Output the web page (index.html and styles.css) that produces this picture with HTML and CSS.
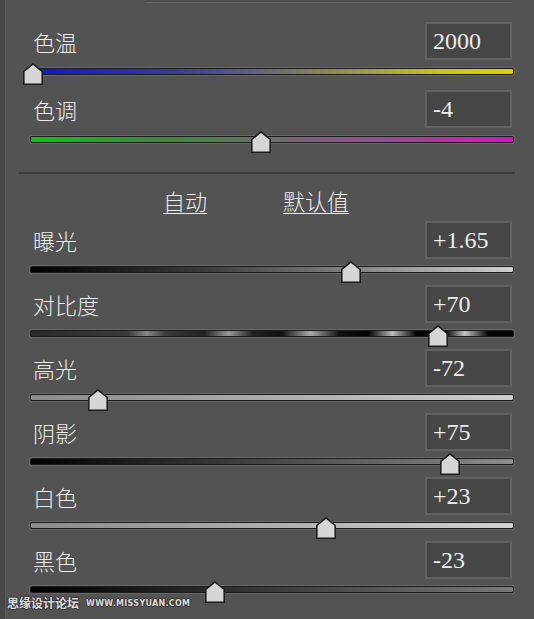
FILE: index.html
```html
<!DOCTYPE html>
<html lang="zh-CN">
<head>
  <meta charset="UTF-8">
  <meta name="viewport" content="width=device-width, initial-scale=1.0">
  <title>基本调整</title>
  <link rel="stylesheet" href="styles.css">
</head>
<body>
  <div class="panel">
    <div class="top-field"></div>

    <div class="group group-white-balance">
      <div class="row">
        <div class="row-head">
          <span class="row-label">色温</span>
          <span class="row-value">2000</span>
        </div>
        <div class="track track-temp">
          <span class="thumb" style="left: 0.4%"><svg viewBox="0 0 20 22" width="20" height="22"><polygon points="10,0.8 19.2,8.5 19.2,21.2 0.8,21.2 0.8,8.5"/></svg></span>
        </div>
      </div>
      <div class="row">
        <div class="row-head">
          <span class="row-label">色调</span>
          <span class="row-value">-4</span>
        </div>
        <div class="track track-tint">
          <span class="thumb" style="left: 47.7%"><svg viewBox="0 0 20 22" width="20" height="22"><polygon points="10,0.8 19.2,8.5 19.2,21.2 0.8,21.2 0.8,8.5"/></svg></span>
        </div>
      </div>
    </div>

    <div class="divider"></div>

    <div class="actions">
      <a href="#" class="action-link">自动</a>
      <a href="#" class="action-link">默认值</a>
    </div>

    <div class="group">
      <div class="row">
        <div class="row-head">
          <span class="row-label">曝光</span>
          <span class="row-value">+1.65</span>
        </div>
        <div class="track track-exposure">
          <span class="thumb" style="left: 66.3%"><svg viewBox="0 0 20 22" width="20" height="22"><polygon points="10,0.8 19.2,8.5 19.2,21.2 0.8,21.2 0.8,8.5"/></svg></span>
        </div>
      </div>
      <div class="row">
        <div class="row-head">
          <span class="row-label">对比度</span>
          <span class="row-value">+70</span>
        </div>
        <div class="track track-contrast">
          <span class="thumb" style="left: 84.5%"><svg viewBox="0 0 20 22" width="20" height="22"><polygon points="10,0.8 19.2,8.5 19.2,21.2 0.8,21.2 0.8,8.5"/></svg></span>
        </div>
      </div>
      <div class="row">
        <div class="row-head">
          <span class="row-label">高光</span>
          <span class="row-value">-72</span>
        </div>
        <div class="track track-highlights">
          <span class="thumb" style="left: 14%"><svg viewBox="0 0 20 22" width="20" height="22"><polygon points="10,0.8 19.2,8.5 19.2,21.2 0.8,21.2 0.8,8.5"/></svg></span>
        </div>
      </div>
      <div class="row">
        <div class="row-head">
          <span class="row-label">阴影</span>
          <span class="row-value">+75</span>
        </div>
        <div class="track track-shadows">
          <span class="thumb" style="left: 87%"><svg viewBox="0 0 20 22" width="20" height="22"><polygon points="10,0.8 19.2,8.5 19.2,21.2 0.8,21.2 0.8,8.5"/></svg></span>
        </div>
      </div>
      <div class="row">
        <div class="row-head">
          <span class="row-label">白色</span>
          <span class="row-value">+23</span>
        </div>
        <div class="track track-whites">
          <span class="thumb" style="left: 61.2%"><svg viewBox="0 0 20 22" width="20" height="22"><polygon points="10,0.8 19.2,8.5 19.2,21.2 0.8,21.2 0.8,8.5"/></svg></span>
        </div>
      </div>
      <div class="row">
        <div class="row-head">
          <span class="row-label">黑色</span>
          <span class="row-value">-23</span>
        </div>
        <div class="track track-blacks">
          <span class="thumb" style="left: 38.2%"><svg viewBox="0 0 20 22" width="20" height="22"><polygon points="10,0.8 19.2,8.5 19.2,21.2 0.8,21.2 0.8,8.5"/></svg></span>
        </div>
      </div>
    </div>

    <div class="watermark">
      <span class="watermark-cn">思缘设计论坛</span>
      <span class="watermark-en">WWW.MISSYUAN.COM</span>
    </div>
  </div>
</body>
</html>
```

FILE: styles.css
```css
:root {
  --bg: #535353;
  --text: #ebebeb;
  --field: #464646;
  --field-border: #626262;
  --track-border: #1c1c1c;
}

* {
  margin: 0;
  padding: 0;
  box-sizing: border-box;
}

html, body {
  height: 100%;
  overflow: hidden;
}

body {
  background: var(--bg);
  color: var(--text);
  font-family: "Noto Sans CJK SC", "Liberation Serif", serif;
}

.panel {
  position: relative;
  height: 619px;
  border-left: 5px solid #474747;
  box-shadow: inset 1px 0 0 #5c5c5c;
  padding: 0 20px 0 25px;
}

.top-field {
  height: 3px;
  margin-left: 116px;
  margin-right: 2px;
  background: #4d4d4d;
  border-bottom: 1px solid #666;
}

.group-white-balance {
  padding-top: 19px;
}

.row {
  margin-bottom: 12px;
}

.group-white-balance .row {
  margin-bottom: 15px;
}

.row-head {
  display: flex;
  justify-content: space-between;
  align-items: center;
  height: 38px;
}

.row-label {
  padding-left: 3px;
  font-size: 22px;
  font-weight: 300;
  line-height: 26px;
}

.row-value {
  width: 87px;
  height: 38px;
  margin-right: 2px;
  padding-left: 6px;
  background: var(--field);
  border: 2px solid var(--field-border);
  font-family: "Liberation Serif", serif;
  font-size: 24px;
  line-height: 34px;
}

.track {
  position: relative;
  height: 7px;
  margin-top: 7px;
  border: 1px solid var(--track-border);
  border-radius: 2px;
  box-shadow: 0 0 0 1px #686868;
}

.group-white-balance .track {
  margin-top: 8px;
}

.track-temp { background: linear-gradient(90deg, #1414c8, #3a3a9a 30%, #77776a 55%, #c6c61a 85%, #d6d600); }
.track-tint { background: linear-gradient(90deg, #12c412, #3a8a3a 25%, #6e6e6e 50%, #9a4a92 75%, #d414c6); }
.track-exposure { background: linear-gradient(90deg, #000, #3a3a3a 35%, #8a8a8a 70%, #cfcfcf); }
.track-contrast {
  background: linear-gradient(90deg,
    #2a2a2a 0%, #3a3a3a 20%, #888 24%, #3a3a3a 28%,
    #222 36%, #999 41%, #222 46%,
    #111 52%, #aaa 58%, #111 64%,
    #000 70%, #bbb 75%, #000 80%,
    #000 86%, #c4c4c4 90%, #000 95%, #000);
}
.track-highlights { background: linear-gradient(90deg, #8a8a8a, #cfcfcf); }
.track-shadows { background: linear-gradient(90deg, #000, #3a3a3a 40%, #8c8c8c); }
.track-whites { background: linear-gradient(90deg, #8a8a8a, #d2d2d2); }
.track-blacks { background: linear-gradient(90deg, #000, #2e2e2e 40%, #7a7a7a); }

.thumb {
  position: absolute;
  top: -6px;
  width: 20px;
  height: 22px;
  transform: translateX(-50%);
}

.thumb svg {
  display: block;
}

.thumb polygon {
  fill: #d6d6d6;
  stroke: #1e1e1e;
  stroke-width: 1.6;
  stroke-linejoin: miter;
}

.divider {
  height: 2px;
  margin: 29px -1px 0 -11px;
  background: #3c3c3c;
}

.actions {
  display: flex;
  gap: 76px;
  height: 47px;
  padding: 13px 0 0 133px;
}

.action-link {
  color: var(--text);
  font-size: 22px;
  font-weight: 300;
  line-height: 26px;
  text-decoration: underline;
  text-decoration-thickness: 1px;
  text-underline-offset: 3px;
}

.watermark {
  position: absolute;
  left: 2px;
  top: 595px;
  display: flex;
  align-items: center;
  gap: 7px;
  text-shadow: 1px 0 #333, -1px 0 #333, 0 1px #333, 0 -1px #333;
  color: #dcdcdc;
}

.watermark-cn {
  font-size: 12px;
  font-weight: 700;
  line-height: 16px;
}

.watermark-en {
  font-family: "DejaVu Sans", sans-serif;
  font-size: 8px;
  font-weight: 700;
  letter-spacing: 0.3px;
}
```
